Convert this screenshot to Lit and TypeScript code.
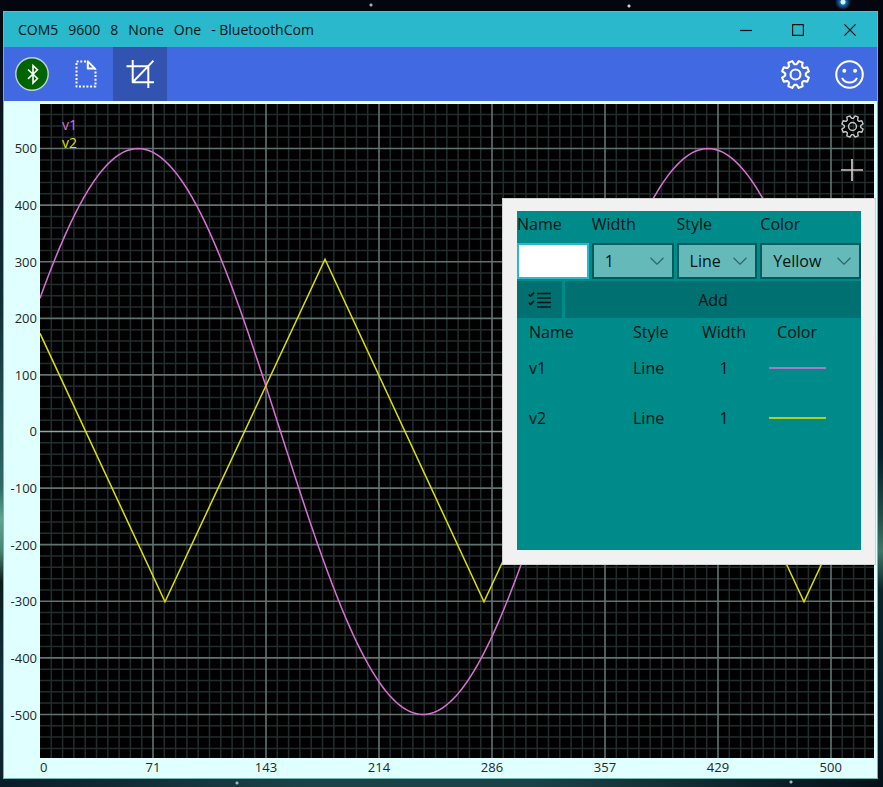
import { LitElement, html, css, svg } from "lit";
import { customElement, state } from "lit/decorators.js";

interface Series {
  name: string;
  style: string;
  width: number;
  color: string;
  path: string;
}

const PLOT_W = 834;
const PLOT_H = 653;
const ZERO_Y = 327;
const MINOR = 11.3;

function sinePath(): string {
  let d = "";
  for (let x = 0; x <= PLOT_W; x += 2) {
    const y = ZERO_Y - 282.5 * Math.cos(((x - 98) * 2 * Math.PI) / 570);
    d += `${x ? "L" : "M"}${x} ${y.toFixed(2)}`;
  }
  return d;
}

const SERIES: Series[] = [
  { name: "v1", style: "Line", width: 1, color: "#da70d6", path: sinePath() },
  {
    name: "v2",
    style: "Line",
    width: 1,
    color: "#e0e000",
    path: "M0 229L125 497L285 155L444 497L604 155L764 497L834 347",
  },
];

const PORT = ["COM5", "9600", "8", "None", "One", "- BluetoothCom"];
const Y_TICKS = [500, 400, 300, 200, 100, 0, -100, -200, -300, -400, -500];
const X_TICKS = [0, 71, 143, 214, 286, 357, 429, 500];

function gearOutline(): string {
  const pts: string[] = [];
  const at = (deg: number, r: number) => {
    const a = ((deg - 90) * Math.PI) / 180;
    return `${(14 + r * Math.cos(a)).toFixed(2)} ${(14 + r * Math.sin(a)).toFixed(2)}`;
  };
  for (let i = 0; i < 8; i++) {
    const c = 22.5 + i * 45;
    pts.push(at(c - 13, 11), at(c - 9, 13.3), at(c + 9, 13.3), at(c + 13, 11));
    pts.push(at(c + 17, 10), at(c + 28, 10));
  }
  return `M${pts.join("L")}Z`;
}

const gear = svg`<path d=${gearOutline()} /><circle cx="14" cy="14" r="4.8" />`;

@customElement("app-root")
export class AppRoot extends LitElement {
  @state() private series: Series[] = SERIES;

  static styles = css`
    :host {
      display: block;
      font-family: "Open Sans", "Noto Sans", sans-serif;
      font-size: 16px;
      color: #001414;
    }
    * {
      box-sizing: border-box;
    }
    button,
    input,
    select {
      font: inherit;
      color: inherit;
      margin: 0;
      padding: 0;
      border: 0;
      border-radius: 0;
      background: none;
    }
    svg {
      display: block;
    }
    .stroke {
      fill: none;
      stroke: currentColor;
      stroke-width: 2;
      stroke-linejoin: round;
    }
    .desktop {
      min-height: 100vh;
      display: flex;
      padding: 11px 5px 8px 3px;
      background:
        radial-gradient(circle at 843px 2px, #d8f4ff 0 2px, #1d6fb5 3px, transparent 8px),
        radial-gradient(circle at 371px 5px, #a8b0b8 0 1px, transparent 2px),
        radial-gradient(circle at 629px 6px, #c8d0d8 0 1px, transparent 2px),
        radial-gradient(circle at 237px 783px, #a8b8b8 0 1px, transparent 2px),
        radial-gradient(circle at 791px 782px, #a8b8b8 0 1px, transparent 2px),
        linear-gradient(to right, #0a1c28, #1b4347 35%, #1b4347 60%, #04101a) bottom / 100% 8px no-repeat,
        linear-gradient(#04070f, #0b1a25 20%, #123039 40%, #2e6a67 62%, #5fa590 66%, #468274 70%, #0c1a1c 74%, #10303a 85%, #0c212b) left / 4px 100% no-repeat,
        linear-gradient(#03060f, #02050e 40%, #06202c 58%, #265049 66%, #3f7668 70%, #0b2228 75%, #061a25 90%, #04101a) right / 6px 100% no-repeat,
        #03060f;
    }
    .window {
      flex: 1;
      min-width: 0;
      display: flex;
      flex-direction: column;
      border: 1px solid #6fb6b4;
      background: #e0ffff;
    }
    .titlebar {
      display: flex;
      align-items: center;
      justify-content: space-between;
      height: 35px;
      padding: 0 1px 0 14px;
      background: #2ab8cd;
      font-size: 14px;
    }
    .title {
      display: flex;
      gap: 10px;
      margin: 0;
      font-size: 14px;
      font-weight: 400;
    }
    .controls {
      display: flex;
    }
    .control {
      width: 52px;
      height: 35px;
      display: grid;
      place-items: center;
    }
    .control .stroke {
      stroke-width: 1.2;
    }
    .toolbar {
      display: flex;
      justify-content: space-between;
      height: 54px;
      padding: 0 1px;
      background: #4169e1;
      color: #fff;
    }
    .group {
      display: flex;
    }
    .tool {
      width: 54px;
      display: grid;
      place-items: center;
    }
    .active {
      background: #3353b1;
    }
    .chart {
      position: relative;
      flex: 1;
      min-height: 0;
      display: grid;
      grid-template-columns: 36px 1fr;
      grid-template-rows: 1fr 20px;
      padding: 3px 3px 0 0;
      font-size: 13px;
      color: #202828;
    }
    .y-axis {
      display: grid;
      grid-template-rows: 16fr repeat(11, 57fr) 15fr;
      align-items: center;
      justify-items: end;
      padding-right: 3px;
    }
    .y-axis::before {
      content: "";
    }
    .x-axis {
      grid-column: 2;
      display: grid;
      grid-template-columns: 565fr repeat(6, 1130fr) 995fr;
      text-align: center;
      line-height: 18px;
    }
    .x-axis span:first-child {
      text-align: left;
    }
    .x-axis span:last-child {
      padding-left: 13px;
    }
    .plot {
      position: relative;
      min-width: 0;
      min-height: 0;
      background: #000;
    }
    .lines {
      position: absolute;
      inset: 0;
      width: 100%;
      height: 100%;
    }
    .lines path {
      fill: none;
      vector-effect: non-scaling-stroke;
    }
    .minor {
      stroke: #232c2c;
      stroke-width: 1.5;
    }
    .major {
      stroke: #61736f;
      stroke-width: 1.6;
    }
    .axis {
      stroke: #8ea5a2;
      stroke-width: 1.6;
    }
    .curve {
      stroke-width: 1.5;
    }
    .legend {
      position: absolute;
      left: 22px;
      top: 12px;
      margin: 0;
      padding: 0;
      list-style: none;
      font-size: 14px;
      line-height: 18px;
    }
    .overlay {
      position: absolute;
      right: 0;
      top: 0;
      width: 44px;
      color: #c8c8c8;
    }
    .overlay button {
      width: 44px;
      height: 44px;
      display: grid;
      place-items: center;
    }
    .overlay .stroke {
      stroke-width: 1.7;
    }
    .flyout {
      position: absolute;
      right: 1px;
      top: 97px;
      width: 374px;
      padding: 12px 14px 14px;
      border: 1px solid #d0d0d0;
      background: #f1f1f1;
      font-size: 16px;
      color: #001414;
    }
    .panel {
      height: 339px;
      background: #008b8b;
    }
    .form {
      display: grid;
      grid-template-columns: 72fr 82fr 81fr 101fr;
      grid-template-rows: 32px 36px;
      column-gap: 3px;
    }
    .form label {
      line-height: 26px;
    }
    .text {
      width: 100%;
      min-width: 0;
      background: #fff;
      border: 2px solid #2ab8cd;
      outline: 0;
      padding: 0 6px;
    }
    .pick {
      position: relative;
      display: grid;
    }
    .pick select {
      appearance: none;
      width: 100%;
      min-width: 0;
      border: 2px solid #005c5c;
      background: #66b9b9;
      padding-left: 11px;
    }
    .chevron {
      position: absolute;
      right: 10px;
      top: 14px;
      pointer-events: none;
      color: #2b6a6a;
    }
    .chevron .stroke {
      stroke-width: 1.2;
    }
    .actions {
      display: grid;
      grid-template-columns: 45px 1fr;
      gap: 3px;
      padding-top: 2px;
    }
    .actions button {
      height: 37px;
      background: #007070;
      display: grid;
      place-items: center;
    }
    .actions .stroke {
      stroke-width: 1.6;
    }
    table {
      width: 100%;
      table-layout: fixed;
      border-collapse: collapse;
    }
    th,
    td {
      padding: 0;
      font-weight: 400;
      text-align: left;
    }
    th {
      height: 25px;
      padding-top: 3px;
      line-height: 22px;
    }
    td {
      height: 50px;
    }
    .c-name {
      width: 116px;
      padding-left: 12px;
    }
    .c-style {
      width: 58px;
    }
    .c-width {
      width: 66px;
      text-align: center;
    }
    .c-color {
      padding-right: 24px;
      text-align: center;
    }
    .swatch {
      width: 57px;
      height: 2px;
      margin: 0 auto;
      opacity: 0.8;
    }
  `;

  private grid() {
    let minor = "";
    let major = "";
    for (let i = 1; i * MINOR < PLOT_W; i++) {
      const seg = `M${(i * MINOR).toFixed(1)} 0V${PLOT_H}`;
      if (i % 10 === 0) major += seg;
      else minor += seg;
    }
    for (let i = -28; i <= 28; i++) {
      const seg = `M0 ${(ZERO_Y - i * MINOR).toFixed(1)}H${PLOT_W}`;
      if (i === 0) continue;
      if (i % 5 === 0) major += seg;
      else minor += seg;
    }
    return svg`
      <path class="minor" d=${minor} />
      <path class="major" d=${major} />
      <path class="axis" d="M0 ${ZERO_Y}H${PLOT_W}" />`;
  }

  private picker(id: string, options: string[]) {
    return html`<span class="pick">
      <select id=${id}>
        ${options.map((o) => html`<option>${o}</option>`)}
      </select>
      <span class="chevron">
        <svg width="14" height="8" viewBox="0 0 14 8"><path class="stroke" d="M.5 .8L7 7.2L13.5 .8" /></svg>
      </span>
    </span>`;
  }

  render() {
    return html`
      <div class="desktop">
        <main class="window">
          <header class="titlebar">
            <h1 class="title">${PORT.map((p) => html`<span>${p}</span>`)}</h1>
            <div class="controls">
              <button class="control" aria-label="Minimize">
                <svg width="12" height="12" viewBox="0 0 12 12"><path class="stroke" d="M0 6.5H12" /></svg>
              </button>
              <button class="control" aria-label="Maximize">
                <svg width="12" height="12" viewBox="0 0 12 12"><path class="stroke" d="M.6 .6H11.4V11.4H.6Z" /></svg>
              </button>
              <button class="control" aria-label="Close">
                <svg width="12" height="12" viewBox="0 0 12 12"><path class="stroke" d="M.4 .4L11.6 11.6M11.6 .4L.4 11.6" /></svg>
              </button>
            </div>
          </header>

          <nav class="toolbar">
            <div class="group">
              <button class="tool" aria-label="Bluetooth">
                <svg width="34" height="34" viewBox="0 0 34 34">
                  <circle cx="17" cy="17" r="16.2" fill="#006400" stroke="#c5d0d8" stroke-width="1.4" />
                  <path d="M13 12.5L22.5 21.5L18 26V8.5L22.5 12.8L13 21.8" fill="none" stroke="#fff" stroke-width="1.6" />
                </svg>
              </button>
              <button class="tool" aria-label="New page">
                <svg width="22" height="28" viewBox="0 0 22 28">
                  <path class="stroke" stroke-dasharray="2 1.7" d="M11 1.5H1.5V26.5H20.5V9" />
                  <path class="stroke" d="M12.8 1.4V8.6H20L12.8 1.4Z" />
                </svg>
              </button>
              <button class="tool active" aria-label="Plot view" aria-pressed="true">
                <svg width="28" height="28" viewBox="0 0 28 28">
                  <path class="stroke" d="M6.7 0V22.2H28M.5 6.2H22.3V28M27.5 .7L6.7 22.2" />
                </svg>
              </button>
            </div>
            <div class="group">
              <button class="tool" aria-label="Settings">
                <svg width="29" height="29" viewBox="0 0 28 28"><g class="stroke">${gear}</g></svg>
              </button>
              <button class="tool" aria-label="Feedback">
                <svg width="29" height="29" viewBox="0 0 28 28">
                  <circle class="stroke" cx="14" cy="14" r="12.8" />
                  <circle cx="9" cy="10.4" r="1.9" fill="currentColor" />
                  <circle cx="19.4" cy="10.4" r="1.9" fill="currentColor" />
                  <path class="stroke" d="M6.8 17.2C9.5 23.2 18.5 23.2 21.2 17.2" />
                </svg>
              </button>
            </div>
          </nav>

          <section class="chart">
            <div class="y-axis">${Y_TICKS.map((t) => html`<span>${t}</span>`)}</div>
            <div class="plot">
              <svg class="lines" viewBox="0 0 ${PLOT_W} ${PLOT_H}" preserveAspectRatio="none">
                ${this.grid()}
                ${this.series.map((s) => svg`<path class="curve" d=${s.path} stroke=${s.color} />`)}
              </svg>
              <ul class="legend">
                ${this.series.map((s) => html`<li style="color:${s.color}">${s.name}</li>`)}
              </ul>
              <div class="overlay">
                <button aria-label="Plot settings">
                  <svg width="23" height="23" viewBox="0 0 28 28"><g class="stroke">${gear}</g></svg>
                </button>
                <button aria-label="Add series">
                  <svg width="22" height="22" viewBox="0 0 22 22"><path class="stroke" d="M11 0V22M0 11H22" /></svg>
                </button>
              </div>
            </div>
            <div class="x-axis">${X_TICKS.map((t) => html`<span>${t}</span>`)}</div>

            <aside class="flyout">
              <div class="panel">
                <div class="form">
                  <label for="name">Name</label>
                  <label for="width">Width</label>
                  <label for="style">Style</label>
                  <label for="color">Color</label>
                  <input class="text" id="name" type="text" />
                  ${this.picker("width", ["1", "2", "3"])}
                  ${this.picker("style", ["Line", "Dash"])}
                  ${this.picker("color", ["Yellow", "Orchid"])}
                </div>
                <div class="actions">
                  <button aria-label="Select items">
                    <svg width="24" height="18" viewBox="0 0 24 18">
                      <path class="stroke" d="M9 2.5H23M9 7H23M9 11.5H23M9 16H23" />
                      <path class="stroke" d="M.8 3.4L2.6 5.2L6.2 1.4M.8 11.6L2.6 13.4L6.2 9.6" />
                    </svg>
                  </button>
                  <button>Add</button>
                </div>
                <table>
                  <thead>
                    <tr>
                      <th class="c-name" scope="col">Name</th>
                      <th class="c-style" scope="col">Style</th>
                      <th class="c-width" scope="col">Width</th>
                      <th class="c-color" scope="col">Color</th>
                    </tr>
                  </thead>
                  <tbody>
                    ${this.series.map(
                      (s) => html`<tr>
                        <td class="c-name">${s.name}</td>
                        <td class="c-style">${s.style}</td>
                        <td class="c-width">${s.width}</td>
                        <td class="c-color"><div class="swatch" style="background:${s.color}"></div></td>
                      </tr>`,
                    )}
                  </tbody>
                </table>
              </div>
            </aside>
          </section>
        </main>
      </div>
    `;
  }
}
